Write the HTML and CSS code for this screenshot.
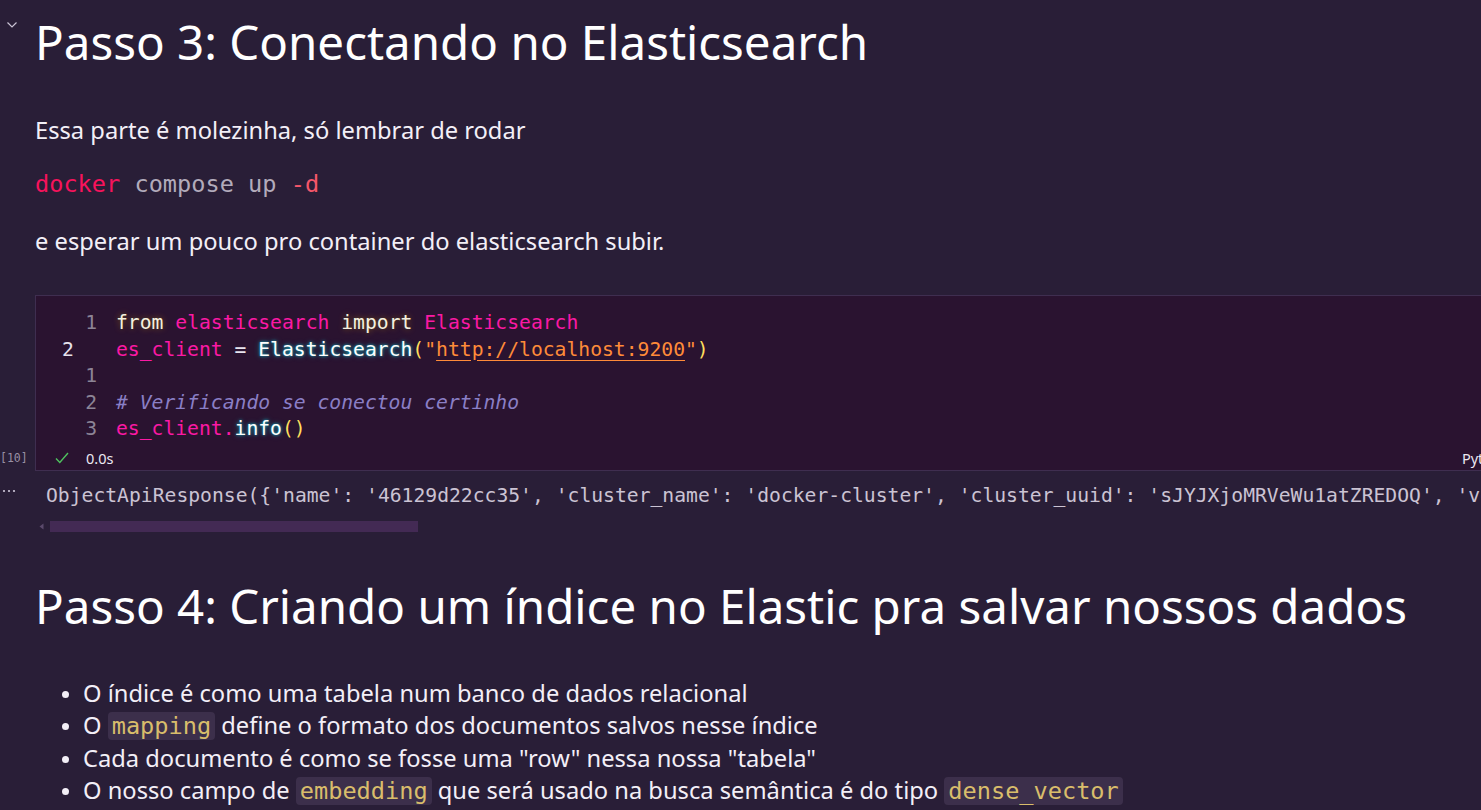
FILE: index.html
```html
<!DOCTYPE html>
<html lang="pt">
<head>
<meta charset="utf-8">
<link rel="stylesheet" href="styles.css">
</head>
<body>
<div class="nb">
  <section class="md">
    <div class="gutter">
      <svg class="chev" width="12" height="8" viewBox="0 0 12 8"><polyline points="1.5,1.5 6,6 10.5,1.5" fill="none" stroke="#c9c2d4" stroke-width="1.2"/></svg>
    </div>
    <div class="md-body">
      <h1 class="h1">Passo 3: Conectando no Elasticsearch</h1>
      <p class="p p1">Essa parte é molezinha, só lembrar de rodar</p>
      <p class="p shell"><span class="sh-cmd">docker</span> <span class="sh-arg">compose up</span> <span class="sh-flag">-d</span></p>
      <p class="p p2">e esperar um pouco pro container do elasticsearch subir.</p>
    </div>
  </section>

  <section class="code-row">
    <div class="gutter exec-gutter"><span class="exec">[10]</span></div>
    <div class="cell">
      <div class="editor">
        <div class="ln"><span class="num">1</span><span class="code"><span class="kw">from</span> <span class="pk">elasticsearch</span> <span class="kw">import</span> <span class="pk">Elasticsearch</span></span></div>
        <div class="ln"><span class="num cur">2</span><span class="code"><span class="pk">es_client</span> <span class="op">=</span> <span class="fn">Elasticsearch</span><span class="par">(</span><span class="str">"<span class="url">http://localhost:9200</span>"</span><span class="par">)</span></span></div>
        <div class="ln"><span class="num">1</span><span class="code"></span></div>
        <div class="ln"><span class="num">2</span><span class="code"><span class="cm"># Verificando se conectou certinho</span></span></div>
        <div class="ln"><span class="num">3</span><span class="code"><span class="pk">es_client.</span><span class="fn">info</span><span class="par">()</span></span></div>
      </div>
      <div class="status">
        <div class="status-left">
          <svg class="check" width="14" height="12" viewBox="0 0 14 12"><polyline points="1,6.5 4.8,10.5 13,1" fill="none" stroke="#4fc25f" stroke-width="1.4"/></svg>
          <span class="time">0.0s</span>
        </div>
        <span class="lang">Python</span>
      </div>
    </div>
  </section>

  <section class="out-row">
    <div class="gutter out-gutter">
      <svg width="14" height="4" viewBox="0 0 14 4"><circle cx="2" cy="2" r="1.1" fill="#cfc8da"/><circle cx="7" cy="2" r="1.1" fill="#cfc8da"/><circle cx="12" cy="2" r="1.1" fill="#cfc8da"/></svg>
    </div>
    <div class="out-body">
      <div class="out-text">ObjectApiResponse({'name': '46129d22cc35', 'cluster_name': 'docker-cluster', 'cluster_uuid': 'sJYJXjoMRVeWu1atZREDOQ', 'version': {'number': '8.15.0'}})</div>
      <div class="scroll">
        <svg class="arrow" width="5" height="7" viewBox="0 0 5 7"><polygon points="4.5,0.5 0.5,3.5 4.5,6.5" fill="#5b4a6c"/></svg>
        <div class="thumb"></div>
      </div>
    </div>
  </section>

  <section class="md">
    <div class="gutter"></div>
    <div class="md-body">
      <h1 class="h1 h2">Passo 4: Criando um índice no Elastic pra salvar nossos dados</h1>
      <ul class="list">
        <li>O índice é como uma tabela num banco de dados relacional</li>
        <li>O <code class="ic">mapping</code> define o formato dos documentos salvos nesse índice</li>
        <li>Cada documento é como se fosse uma "row" nessa nossa "tabela"</li>
        <li>O nosso campo de <code class="ic">embedding</code> que será usado na busca semântica é do tipo <code class="ic">dense_vector</code></li>
      </ul>
    </div>
  </section>
</div>
</body>
</html>
```

FILE: styles.css
```css
html, body {
  margin: 0;
  padding: 0;
  background: #291e37;
  overflow: hidden;
  height: 810px;
}
body {
  font-family: "Noto Sans", "Open Sans", sans-serif;
  color: #f3eff7;
}
.nb {
  display: flex;
  flex-direction: column;
}
.md {
  display: flex;
}
.gutter {
  width: 35px;
  flex: 0 0 35px;
  position: relative;
}
.chev {
  display: block;
  margin: 21px 0 0 6px;
}
.md-body {
  flex: 1;
  min-width: 0;
}
.h1 {
  margin: 13px 0 0;
  font-size: 47.5px;
  font-weight: 400;
  line-height: 58px;
  color: #ffffff;
  white-space: nowrap;
}
.p {
  margin: 0;
  font-size: 23.7px;
  line-height: 32px;
}
.p1 { margin-top: 43px; }
.shell {
  margin-top: 22px;
  font-family: "DejaVu Sans Mono", monospace;
  font-size: 23.6px;
}
.sh-cmd { color: #f7135c; }
.sh-arg { color: #b2abbb; }
.sh-flag { color: #f5566a; }
.p2 { margin-top: 25px; }

/* code cell */
.code-row {
  display: flex;
  margin-top: 38px;
}
.exec-gutter {
  display: flex;
  align-items: flex-end;
}
.exec {
  font-family: "DejaVu Sans Mono", monospace;
  font-size: 11.5px;
  color: #9890a4;
  line-height: 24px;
  margin-bottom: 1px;
}
.cell {
  flex: 0 0 1500px;
  width: 1500px;
  background: #2a1330;
  border: 1px solid #3f2e50;
  box-sizing: border-box;
  padding-top: 14px;
}
.editor {
  font-family: "DejaVu Sans Mono", monospace;
  font-size: 19.7px;
}
.ln {
  display: flex;
  height: 26.5px;
  line-height: 26.5px;
  white-space: pre;
}
.num {
  width: 61px;
  flex: 0 0 61px;
  text-align: right;
  color: #8c8496;
  padding-right: 19px;
  box-sizing: content-box;
}
.num.cur {
  text-align: left;
  padding-left: 26px;
  width: 35px;
  flex-basis: 35px;
  color: #e6e1ec;
}
.code { color: #e8e4ef; }
.kw {
  color: #f6efdf;
  text-shadow: 0 0 2px #393a33, 0 0 6px rgba(243, 159, 5, 0.45);
}
.pk { color: #fb19a4; }
.op { color: #e8e4ef; }
.fn {
  color: #fdfdfd;
  text-shadow: 0 0 3px rgba(3, 237, 249, 0.75), 0 0 6px rgba(3, 237, 249, 0.35);
}
.par { color: #fede5d; }
.str { color: #ff8b39; }
.url {
  text-decoration: underline;
  text-decoration-color: #ff8b39;
  text-underline-offset: 4px;
}
.cm {
  color: #8a7fc6;
  font-style: italic;
}
.status {
  display: flex;
  justify-content: space-between;
  align-items: center;
  height: 24px;
  margin-top: 3px;
  padding: 0 24px 0 19px;
}
.status-left {
  display: flex;
  align-items: center;
  gap: 17px;
}
.check { display: block; }
.time, .lang {
  font-size: 14.5px;
  color: #ece8f2;
}

/* output */
.out-row {
  display: flex;
  margin-top: 12px;
}
.out-gutter svg {
  display: block;
  margin: 6px 0 0 2px;
}
.out-body {
  flex: 1;
  min-width: 0;
  overflow: hidden;
}
.out-text {
  font-family: "DejaVu Sans Mono", monospace;
  font-size: 19.7px;
  line-height: 26px;
  color: #cbc3d3;
  white-space: pre;
  padding-left: 11px;
}
.scroll {
  display: flex;
  align-items: center;
  margin-top: 12px;
  height: 11px;
}
.arrow {
  display: block;
  margin-left: 4px;
}
.thumb {
  margin-left: 6px;
  width: 368px;
  height: 11px;
  background: #432a54;
}

/* second markdown */
.h2 { margin-top: 45px; }
.list {
  margin: 42px 0 0;
  padding-left: 48px;
  font-size: 23.7px;
  line-height: 32px;
}
.list li::marker { font-size: 20px; }
.ic {
  font-family: "DejaVu Sans Mono", monospace;
  font-size: 23.6px;
  color: #d9bd6b;
  background: #3c2f4b;
  border-radius: 4px;
  padding: 0 4px;
}
```
